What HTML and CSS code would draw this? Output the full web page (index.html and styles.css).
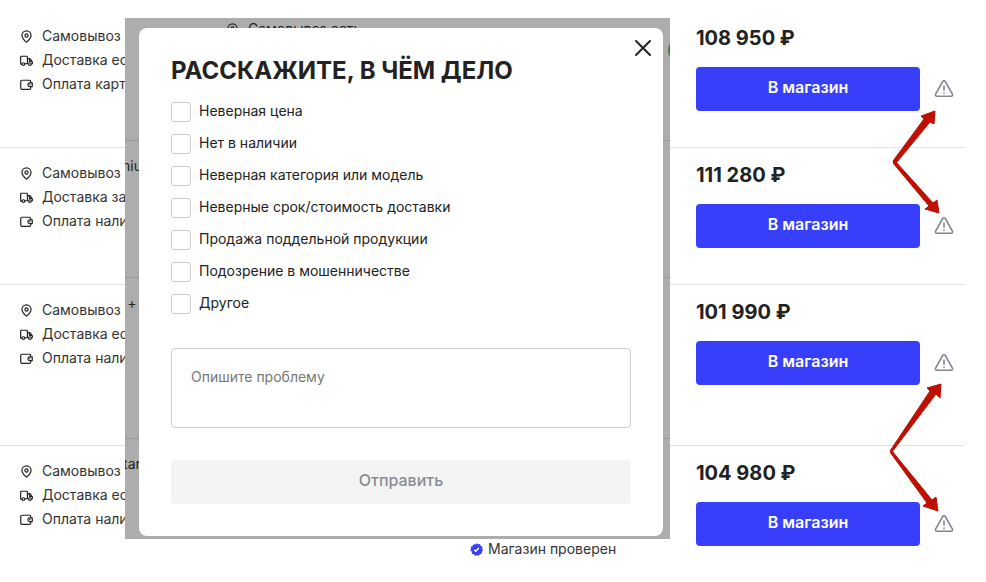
FILE: index.html
```html
<!DOCTYPE html>
<html lang="ru">
<head>
<meta charset="utf-8">
<meta name="viewport" content="width=device-width, initial-scale=1">
<title>Предложения магазинов</title>
<link rel="stylesheet" href="styles.css">
</head>
<body>
<svg class="sprite" aria-hidden="true">
  <symbol id="pin" viewBox="0 0 14 14"><path d="M7 .9a4.900 4.900 0 0 0-4.900 4.900c0 3 2.300 5 4.900 7.300 2.600-2.300 4.900-4.300 4.900-7.300A4.900 4.900 0 0 0 7 .9z"/><circle cx="7" cy="5.900" r="1.700"/></symbol>
  <symbol id="truck" viewBox="0 0 14 14"><path d="M1.900 11H1.400a.7.7 0 0 1-.7-.7V3.200c0-.5.300-.8.800-.8h5.700c.5 0 .8.300.8.800v7.300H5.400M8 5h2.300c.4 0 .7.200.9.500l1.900 2.600c.1.200.2.400.2.600v1.600a.6.600 0 0 1-.6.600M10.200 5v3h2.800"/><circle cx="3.700" cy="10.900" r="1.500"/><circle cx="10.700" cy="10.900" r="1.500"/></symbol>
  <symbol id="wallet" viewBox="0 0 14 14"><path d="M11.500 4.700V3.400c0-.7-.4-1-1-1h-8.300C1.300 2.400.8 2.800.8 3.600v7.200c0 .9.5 1.400 1.400 1.400h8.100c.8 0 1.200-.4 1.200-1.200V9.600M13.200 5.200h-2.700a2 2 0 0 0 0 4h2.700zM10.500 7.200h.2"/></symbol>
  <symbol id="warn" viewBox="0 0 20 20"><path d="M8.700 2.500a1.500 1.500 0 0 1 2.600 0l7.100 12.600a1.500 1.500 0 0 1-1.300 2.200H2.900a1.500 1.500 0 0 1-1.300-2.200zM10 6.500v5.300M10 13.600v1.500"/></symbol>
</svg>

<main class="offers">
  <article class="offer">
    <ul class="terms">
      <li><svg class="icon"><use href="#pin"/></svg>Самовывоз есть</li>
      <li><svg class="icon"><use href="#truck"/></svg>Доставка есть</li>
      <li><svg class="icon"><use href="#wallet"/></svg>Оплата картой</li>
    </ul>
    <div class="buy">
      <p class="price">108 950 ₽</p>
      <button class="shop" type="button">В магазин</button>
      <button class="report" type="button" aria-label="Пожаловаться"><svg><use href="#warn"/></svg></button>
    </div>
  </article>
  <article class="offer">
    <ul class="terms">
      <li><svg class="icon"><use href="#pin"/></svg>Самовывоз есть</li>
      <li><svg class="icon"><use href="#truck"/></svg>Доставка завтра</li>
      <li><svg class="icon"><use href="#wallet"/></svg>Оплата наличными</li>
    </ul>
    <div class="buy">
      <p class="price">111 280 ₽</p>
      <button class="shop" type="button">В магазин</button>
      <button class="report" type="button" aria-label="Пожаловаться"><svg><use href="#warn"/></svg></button>
    </div>
  </article>
  <article class="offer offer-tall">
    <ul class="terms">
      <li><svg class="icon"><use href="#pin"/></svg>Самовывоз есть</li>
      <li><svg class="icon"><use href="#truck"/></svg>Доставка есть</li>
      <li><svg class="icon"><use href="#wallet"/></svg>Оплата наличными</li>
    </ul>
    <div class="buy">
      <p class="price">101 990 ₽</p>
      <button class="shop" type="button">В магазин</button>
      <button class="report" type="button" aria-label="Пожаловаться"><svg><use href="#warn"/></svg></button>
    </div>
  </article>
  <article class="offer">
    <ul class="terms">
      <li><svg class="icon"><use href="#pin"/></svg>Самовывоз есть</li>
      <li><svg class="icon"><use href="#truck"/></svg>Доставка есть</li>
      <li><svg class="icon"><use href="#wallet"/></svg>Оплата наличными</li>
    </ul>
    <p class="verified">
      <svg viewBox="0 0 14 14" aria-hidden="true"><path class="seal" d="M7 .2l1.700 1.200 2.100-.2.800 1.900 1.900 1-.3 2 .7 1.600-1.100 1.700-.1 2-2 .7-1.300 1.600L7.300 13.300 5.200 13.800 4.100 12 2 11.500l.1-2.100L.3 8l.8-1.900L.9 4l1.900-.8 1-1.900 2 .2z"/><path class="tick" d="M4.500 7.200l1.700 1.600 3.300-3.300"/></svg>
      Магазин проверен
    </p>
    <div class="buy">
      <p class="price">104 980 ₽</p>
      <button class="shop" type="button">В магазин</button>
      <button class="report" type="button" aria-label="Пожаловаться"><svg><use href="#warn"/></svg></button>
    </div>
  </article>

  <svg class="arrows" viewBox="0 0 60 410" aria-hidden="true">
    <path d="M7 60L38 18 35 15 49 10 48 23 44 21 11 61 8 63z"/>
    <path d="M10 61L47 102 51 99 53 112 39 108 43 105 7 62z"/>
    <path d="M4 350L44 290 41 287 55 283 54 297 50 293 6 351z"/>
    <path d="M6 350L46 399 50 396 52 410 37 405 41 402 4 351z"/>
  </svg>
</main>

<div class="overlay">
  <div class="behind" aria-hidden="true">
    <div class="behind-row">
      <div class="behind-term"><svg class="icon"><use href="#pin"/></svg>Самовывоз есть</div>
      <i class="dot"></i>
    </div>
    <div class="behind-row"><span class="behind-name">niu</span></div>
    <div class="behind-row behind-tall"><span class="behind-name">+</span></div>
    <div class="behind-row"><span class="behind-name">tar</span></div>
  </div>
  <section class="dialog" role="dialog" aria-labelledby="title">
    <button class="close" type="button" aria-label="Закрыть"><svg viewBox="0 0 18 18"><path d="M2 2l14 14M16 2l-14 14"/></svg></button>
    <form class="form">
      <h1 class="title" id="title">РАССКАЖИТЕ, В ЧЁМ ДЕЛО</h1>
      <div class="reasons">
        <label class="reason"><input type="checkbox"><span>Неверная цена</span></label>
        <label class="reason"><input type="checkbox"><span>Нет в наличии</span></label>
        <label class="reason"><input type="checkbox"><span>Неверная категория или модель</span></label>
        <label class="reason"><input type="checkbox"><span>Неверные срок/стоимость доставки</span></label>
        <label class="reason"><input type="checkbox"><span>Продажа поддельной продукции</span></label>
        <label class="reason"><input type="checkbox"><span>Подозрение в мошенничестве</span></label>
        <label class="reason"><input type="checkbox"><span>Другое</span></label>
      </div>
      <textarea class="problem" aria-label="Опишите проблему" placeholder="Опишите проблему"></textarea>
      <button class="send" type="submit" disabled>Отправить</button>
    </form>
  </section>
</div>
</body>
</html>
```
FILE: styles.css
```css
* { box-sizing: border-box; }

body {
  margin: 0;
  position: relative;
  background: #fff;
  color: #222;
  font: 14px/24px Inter, "Liberation Sans", sans-serif;
}

p, h1, ul { margin: 0; padding: 0; }
button { padding: 0; border: 0; font: inherit; }
.sprite { position: absolute; width: 0; height: 0; }

.offers { position: relative; margin-right: 22px; padding-top: 11px; }

.offer {
  display: grid;
  grid-template-columns: 450px 1fr 268px;
  min-height: 137px;
  padding: 13px 0 0 20px;
  border-bottom: 1px solid #e2e2e2;
}
.offer-tall { min-height: 161px; }
.offer:last-of-type { min-height: 0; border-bottom: 0; }

.terms { list-style: none; color: #333; }
.terms li { display: flex; align-items: center; gap: 9px; }

.icon {
  width: 13px;
  height: 13px;
  fill: none;
  stroke: #222;
  stroke-width: 1.3;
  stroke-linecap: round;
  stroke-linejoin: round;
}

.buy {
  grid-column: 3;
  display: grid;
  grid-template-columns: 1fr 20px;
  column-gap: 14px;
  row-gap: 15px;
  align-content: start;
  align-items: center;
  padding-right: 10px;
}
.price { grid-column: 1 / 3; font-size: 20px; line-height: 28px; font-weight: 700; }

.shop {
  height: 44px;
  padding-bottom: 4px;
  border-radius: 4px;
  background: #373ffb;
  color: #fff;
  font-size: 16px;
  font-weight: 600;
}

.report { width: 20px; height: 20px; background: none; }
.report svg {
  display: block;
  width: 20px;
  height: 20px;
  fill: none;
  stroke: #85878f;
  stroke-width: 1.6;
}

.verified {
  grid-column: 2;
  display: flex;
  align-items: center;
  gap: 5px;
  padding-top: 78px;
  color: #333;
  white-space: nowrap;
}
.verified svg { width: 13px; height: 13px; }
.seal { fill: #373ffb; }
.tick { fill: none; stroke: #fff; stroke-width: 1.5; }

.arrows {
  position: absolute;
  top: 101px;
  right: 18px;
  width: 60px;
  height: 410px;
  overflow: visible;
  fill: #bd1002;
  stroke: #bd1002;
  stroke-linejoin: round;
}

.overlay {
  position: absolute;
  top: 18px;
  left: 125px;
  right: 316px;
  padding: 10px 7px 3px 14px;
  background: #adadad;
  overflow: hidden;
}

.behind { position: absolute; inset: 0; }
.behind-row {
  display: flex;
  justify-content: space-between;
  height: 137px;
  padding-top: 13px;
  border-bottom: 1px solid #999;
}
.behind-row:first-child { height: 123px; padding-top: 0; }
.behind-tall { height: 161px; }
.behind-row:last-child { border-bottom: 0; }
.behind-name {
  display: flex;
  justify-content: center;
  width: 14px;
  overflow: hidden;
}
.behind-term { display: flex; align-items: center; gap: 9px; height: 22px; margin-left: 101px; }
.dot { width: 24px; height: 24px; margin: 20px -22px 0 0; border-radius: 50%; background: #2e8b3a; }

.dialog {
  position: relative;
  padding: 29px 32px 32px;
  border-radius: 8px;
  background: #fff;
}

.close { position: absolute; top: 11px; right: 11px; width: 18px; height: 18px; background: none; }
.close svg { display: block; fill: none; stroke: #222; stroke-width: 2; stroke-linecap: round; }

.form { display: flex; flex-direction: column; }
.title { font-size: 24px; line-height: 28px; font-weight: 700; }

.reasons { display: flex; flex-direction: column; gap: 12px; margin: 17px 0 34px; }
.reason { display: flex; gap: 8px; height: 20px; line-height: 18px; }
.reason input {
  appearance: none;
  width: 20px;
  height: 20px;
  margin: 0;
  border: 1px solid #ccc;
  border-radius: 3px;
  background: #fff;
}

.problem {
  height: 80px;
  padding: 16px 19px;
  border: 1px solid #ccc;
  border-radius: 4px;
  background: #fff;
  color: #222;
  font: inherit;
  resize: none;
}
.problem::placeholder { color: #777; }

.send {
  height: 44px;
  margin-top: 32px;
  padding-bottom: 4px;
  border-radius: 4px;
  background: #f4f4f4;
  color: #8a8c93;
  font-size: 16px;
  font-weight: 500;
}
```
